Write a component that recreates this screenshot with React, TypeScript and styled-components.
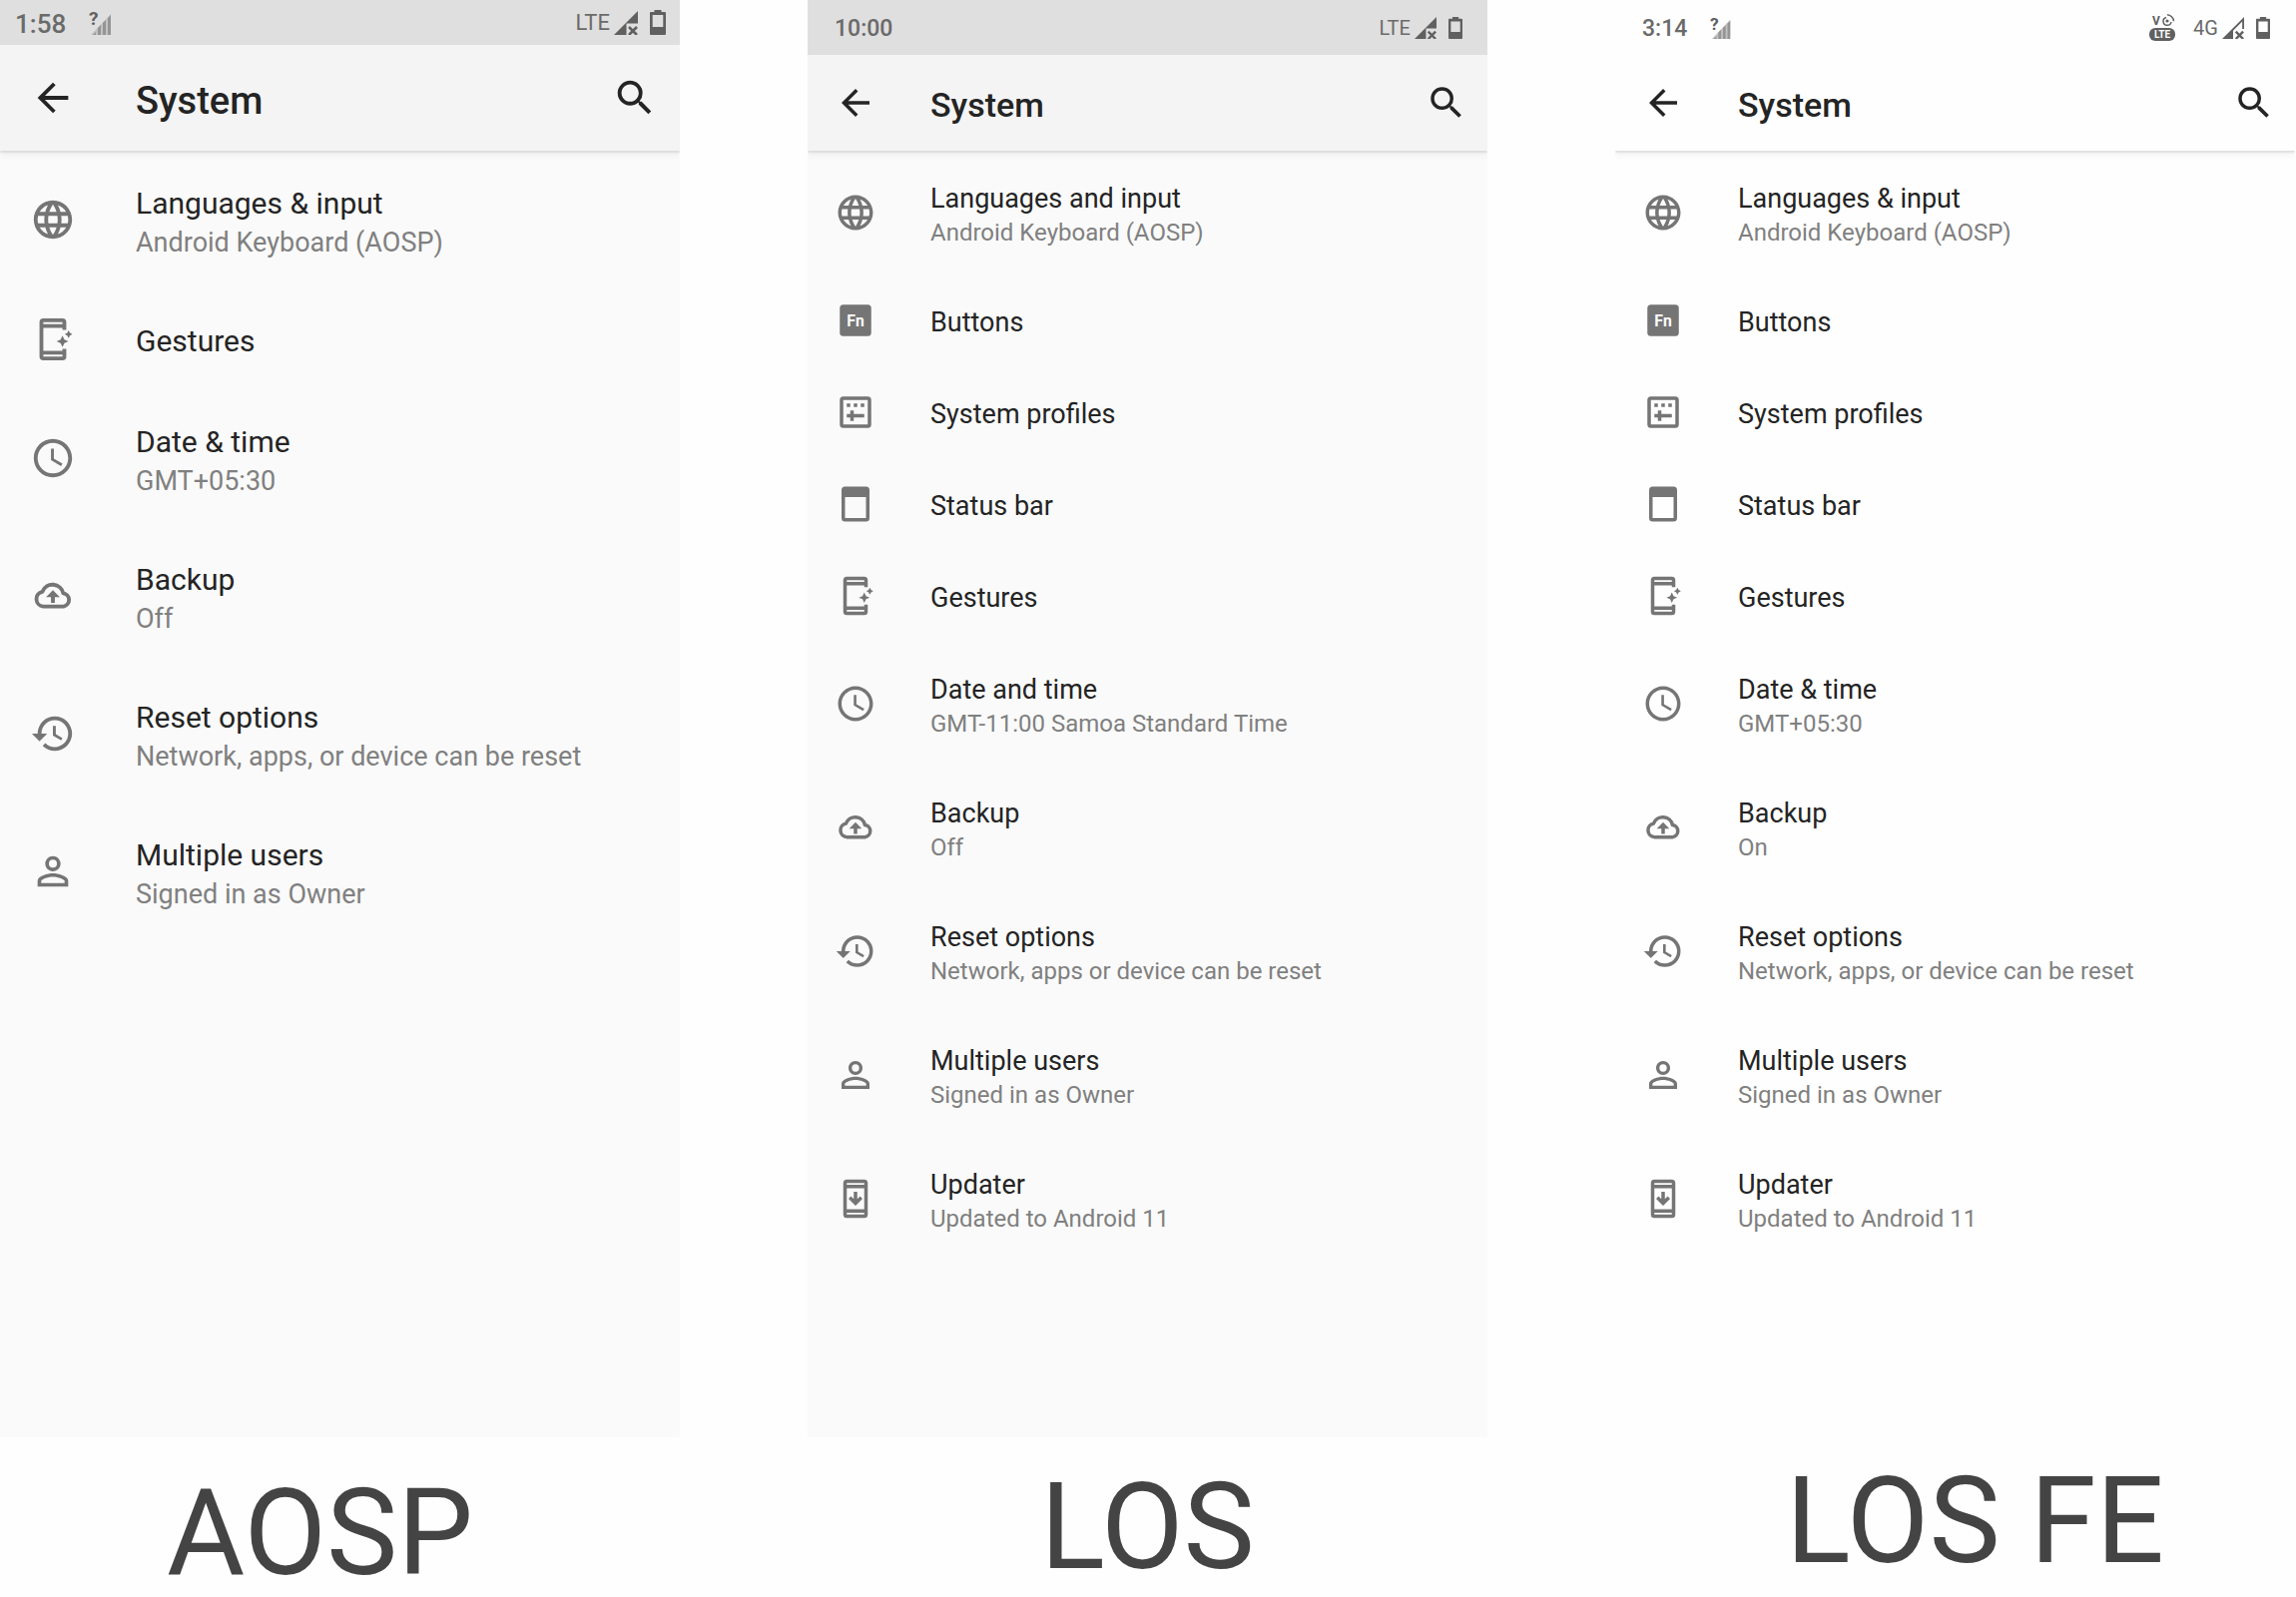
import React from 'react';
import styled, { createGlobalStyle, ThemeProvider } from 'styled-components';
import {
  MdArrowBack,
  MdHistory,
  MdLanguage,
  MdPersonOutline,
  MdSchedule,
  MdSearch,
} from 'react-icons/md';

/* ---------- density presets ---------- */

interface Density {
  statusHeight: number;
  statusLeft: number;
  statusRight: number;
  clock: number;
  network: number;
  signal: number;
  battery: number;
  icon: number;
  edge: number;
  searchEdge: number;
  textGap: number;
  heading: number;
  headingDrop: number;
  title: number;
  titleLine: number;
  summary: number;
  summaryLine: number;
  textDrop: number;
  rowSingle: number;
  rowDouble: number;
}

const large: Density = {
  statusHeight: 45,
  statusLeft: 15,
  statusRight: 14,
  clock: 26,
  network: 22,
  signal: 24,
  battery: 25,
  icon: 46,
  edge: 30,
  searchEdge: 22,
  textGap: 60,
  heading: 38,
  headingDrop: 6,
  title: 30,
  titleLine: 40,
  summary: 27,
  summaryLine: 38,
  textDrop: 5,
  rowSingle: 101,
  rowDouble: 138,
};

const compact: Density = {
  statusHeight: 55,
  statusLeft: 27,
  statusRight: 25,
  clock: 23,
  network: 20,
  signal: 22,
  battery: 22,
  icon: 42,
  edge: 27,
  searchEdge: 20,
  textGap: 54,
  heading: 34,
  headingDrop: 3,
  title: 27,
  titleLine: 36,
  summary: 24,
  summaryLine: 32,
  textDrop: 4,
  rowSingle: 92,
  rowDouble: 124,
};

interface Surface {
  status: string;
  header: string;
  body: string;
}

const grey: Surface = { status: '#dfdfdf', header: '#f4f4f4', body: '#fafafa' };
const white: Surface = { status: '#fefefe', header: '#fefefe', body: '#fefefe' };

interface PhoneTheme {
  d: Density;
  s: Surface;
}

/* ---------- styles ---------- */

const GlobalStyle = createGlobalStyle`
  *, *::before, *::after { box-sizing: border-box; }
  body {
    margin: 0;
    background: #fefefe;
    color: #242424;
    font-family: Roboto, "Liberation Sans", sans-serif;
  }
  button {
    border: 0;
    padding: 0;
    background: none;
    color: inherit;
    font: inherit;
    text-align: left;
    cursor: pointer;
  }
`;

const Comparison = styled.main`
  display: grid;
  grid-template-columns: repeat(3, minmax(0, 1fr));
  column-gap: 128px;
  min-height: 100vh;
  padding-right: 1px;
`;

const Column = styled.figure`
  display: flex;
  flex-direction: column;
  margin: 0;
`;

const Caption = styled.figcaption<{ $top: number; $left: number; $right: number }>`
  height: 160px;
  padding: ${(p) => p.$top}px ${(p) => p.$right}px 0 ${(p) => p.$left}px;
  color: #444;
  font-size: 120px;
  line-height: 120px;
  text-align: center;
  white-space: nowrap;
`;

const Phone = styled.section<{ theme: PhoneTheme }>`
  flex: 1;
  display: flex;
  flex-direction: column;
  overflow: hidden;
  background: ${(p) => p.theme.s.body};
`;

const StatusBar = styled.div<{ theme: PhoneTheme }>`
  display: flex;
  align-items: center;
  height: ${(p) => p.theme.d.statusHeight}px;
  padding: 0 ${(p) => p.theme.d.statusRight}px 0 ${(p) => p.theme.d.statusLeft}px;
  background: ${(p) => p.theme.s.status};
  color: #606060;
`;

const Clock = styled.time<{ theme: PhoneTheme }>`
  margin-right: 24px;
  padding-top: 3px;
  font-size: ${(p) => p.theme.d.clock}px;
  font-weight: 500;
  line-height: 32px;
  color: #6a6a6a;
`;

const StatusIcons = styled.div`
  display: flex;
  align-items: center;
  margin-left: auto;
`;

const Network = styled.span<{ theme: PhoneTheme }>`
  margin-right: 4px;
  color: #6a6a6a;
  font-size: ${(p) => p.theme.d.network}px;
  line-height: 28px;
`;

const SignalSvg = styled.svg<{ theme: PhoneTheme }>`
  width: ${(p) => p.theme.d.signal}px;
  height: ${(p) => p.theme.d.signal}px;
  margin-right: 12px;
`;

const UnknownSvg = styled.svg<{ theme: PhoneTheme }>`
  width: ${(p) => p.theme.d.signal}px;
  height: ${(p) => p.theme.d.signal}px;
  overflow: visible;
`;

const BatterySvg = styled.svg<{ theme: PhoneTheme }>`
  height: ${(p) => p.theme.d.battery}px;
`;

const VolteSvg = styled.svg`
  width: 27px;
  height: 28px;
  margin-right: 17px;
  overflow: visible;
`;

const Header = styled.header<{ theme: PhoneTheme }>`
  display: flex;
  align-items: center;
  height: ${(p) => 151 - p.theme.d.statusHeight}px;
  padding: 0 ${(p) => p.theme.d.searchEdge}px 0 ${(p) => p.theme.d.edge}px;
  background: ${(p) => p.theme.s.header};
  box-shadow: 0 2px 2px rgba(0, 0, 0, 0.1), 0 6px 6px rgba(0, 0, 0, 0.03);
`;

const IconButton = styled.button<{ theme: PhoneTheme }>`
  display: flex;
  font-size: ${(p) => p.theme.d.icon}px;
`;

const Heading = styled.h1<{ theme: PhoneTheme }>`
  flex: 1;
  margin: 0;
  padding: ${(p) => p.theme.d.headingDrop}px 0 0 ${(p) => p.theme.d.textGap}px;
  font-size: ${(p) => p.theme.d.heading}px;
  font-weight: 500;
  line-height: 44px;
`;

const List = styled.ul`
  margin: 0;
  padding: 0;
  list-style: none;
`;

const Row = styled.button<{ theme: PhoneTheme; $double: boolean }>`
  display: flex;
  align-items: center;
  gap: ${(p) => p.theme.d.textGap}px;
  width: 100%;
  min-height: ${(p) => (p.$double ? p.theme.d.rowDouble : p.theme.d.rowSingle)}px;
  padding-left: ${(p) => p.theme.d.edge}px;
`;

const RowIcon = styled.span<{ theme: PhoneTheme }>`
  display: flex;
  flex: none;
  color: #757575;
  font-size: ${(p) => p.theme.d.icon}px;
`;

const RowText = styled.span<{ theme: PhoneTheme }>`
  display: flex;
  flex-direction: column;
  padding-top: ${(p) => p.theme.d.textDrop}px;
`;

const Title = styled.span<{ theme: PhoneTheme }>`
  font-size: ${(p) => p.theme.d.title}px;
  line-height: ${(p) => p.theme.d.titleLine}px;
`;

const Summary = styled.span<{ theme: PhoneTheme }>`
  color: #808080;
  font-size: ${(p) => p.theme.d.summary}px;
  line-height: ${(p) => p.theme.d.summaryLine}px;
`;

/* ---------- icons ---------- */

const Glyph = ({ children }: { children: React.ReactNode }) => (
  <svg width="1em" height="1em" viewBox="0 0 24 24" fill="currentColor" aria-hidden="true">
    {children}
  </svg>
);

const FnIcon = () => (
  <Glyph>
    <rect x="3" y="3" width="18" height="18" rx="2" />
    <text x="12" y="15.3" fontSize="9" fontWeight="700" textAnchor="middle" fill="#fafafa">
      Fn
    </text>
  </Glyph>
);

const ProfilesIcon = () => (
  <Glyph>
    <path
      fillRule="evenodd"
      d="M5 3h14a2 2 0 0 1 2 2v14a2 2 0 0 1-2 2H5a2 2 0 0 1-2-2V5a2 2 0 0 1 2-2zm0 2v14h14V5z"
    />
    <path d="M7 7h2v2H7zM11 7h2v2h-2zM15 7h2v2h-2zM9 11h2v2h6v2h-6v2H9v-2H7v-2h2z" />
  </Glyph>
);

const StatusBarIcon = () => (
  <Glyph>
    <path
      fillRule="evenodd"
      d="M6 2h12a2 2 0 0 1 2 2v16a2 2 0 0 1-2 2H6a2 2 0 0 1-2-2V4a2 2 0 0 1 2-2zm0 6v12h12V8z"
    />
  </Glyph>
);

const GesturesIcon = () => (
  <Glyph>
    <path
      fillRule="evenodd"
      d="M7 1h10a2 2 0 0 1 2 2v4h-2V6H7v12h10v-1h2v4a2 2 0 0 1-2 2H7a2 2 0 0 1-2-2V3a2 2 0 0 1 2-2zm0 2v1h10V3zm0 17v1h10v-1z"
    />
    <path d="M17 10l1 2.100 2.100 .9-2.100 .9-1 2.100-1-2.100-2.100-.9 2.100-.9zM20.200 7.300l.7 1.300 1.300.7-1.300.7-.7 1.300-.7-1.300-1.300-.7 1.300-.7z" />
  </Glyph>
);

const BackupIcon = () => (
  <Glyph>
    <path
      d="M6.900 17.500A3.900 3.900 0 0 1 6.500 9.800A5.700 5.700 0 0 1 17.400 10.600A3.500 3.500 0 0 1 17.600 17.500z"
      fill="none"
      stroke="currentColor"
      strokeWidth="2"
      strokeLinejoin="round"
    />
    <path d="M12 9L8.400 12.700H11v3h2v-3h2.600z" />
  </Glyph>
);

const UpdaterIcon = () => (
  <Glyph>
    <path
      fillRule="evenodd"
      d="M7 1h10a2 2 0 0 1 2 2v18a2 2 0 0 1-2 2H7a2 2 0 0 1-2-2V3a2 2 0 0 1 2-2zm0 2v1h10V3zm0 3v12h10V6zm0 14v1h10v-1z"
    />
    <path d="M11 8h2v4.2l1.6-1.6L16 12l-4 4-4-4 1.4-1.4 1.6 1.6z" />
  </Glyph>
);

const UnknownSignal = () => (
  <UnknownSvg viewBox="0 0 24 24" role="img" aria-label="Unknown signal">
    <path d="M1 24L21 3v21z" fill="#c2c2c2" />
    <path
      d="M3 24l3-3v3zM8 24v-7l3-3v10zM13 24V12l3-3v15zM18 24V7l3-3v20z"
      fill="#959595"
    />
    <text x="-1" y="14" fontSize="19" fontWeight="700" fill="#606060">
      ?
    </text>
  </UnknownSvg>
);

const Signal = ({ weak }: { weak?: boolean }) => (
  <SignalSvg viewBox="0 0 24 24" fill="currentColor" role="img" aria-label="No data">
    <path
      d={weak ? 'M0 24L12 12v12zM12 12L24 0v13h-2V5L12 15z' : 'M0 24L24 0v12.5H12.5V24z'}
    />
    <path d="M15 16l8 8M23 16l-8 8" stroke="currentColor" strokeWidth="2.6" />
  </SignalSvg>
);

const Battery = () => (
  <BatterySvg viewBox="0 0 16 25" fill="currentColor" role="img" aria-label="Battery">
    <path
      fillRule="evenodd"
      d="M4.5 0h7v2H15a1 1 0 0 1 1 1v21a1 1 0 0 1-1 1H1a1 1 0 0 1-1-1V3a1 1 0 0 1 1-1h3.500zM2.700 5v12h10.600V5z"
    />
  </BatterySvg>
);

const Volte = () => (
  <VolteSvg viewBox="0 0 27 28" role="img" aria-label="VoLTE">
    <text x="3" y="11" fontSize="12" fontWeight="700" fill="#606060">
      V
    </text>
    <g fill="none" stroke="#606060" strokeWidth="1.500">
      <path d="M17 3.500a4 4 0 1 0 5 4.500" />
      <path d="M18 0.800a7 7 0 0 1 6.500 6.500" />
    </g>
    <circle cx="18" cy="7" r="1.600" fill="#606060" />
    <rect y="14" width="26" height="13" rx="6" fill="#606060" />
    <text x="13" y="24" fontSize="10" fontWeight="700" textAnchor="middle" fill="#fefefe">
      LTE
    </text>
  </VolteSvg>
);

/* ---------- data ---------- */

interface Item {
  icon: React.ReactNode;
  title: string;
  summary?: string;
}

const languages = (title: string): Item => ({
  icon: <MdLanguage />,
  title,
  summary: 'Android Keyboard (AOSP)',
});
const gestures: Item = { icon: <GesturesIcon />, title: 'Gestures' };
const dateTime = (title: string, summary: string): Item => ({
  icon: <MdSchedule />,
  title,
  summary,
});
const backup = (summary: string): Item => ({
  icon: <BackupIcon />,
  title: 'Backup',
  summary,
});
const reset = (summary: string): Item => ({
  icon: <MdHistory />,
  title: 'Reset options',
  summary,
});
const users: Item = {
  icon: <MdPersonOutline />,
  title: 'Multiple users',
  summary: 'Signed in as Owner',
};
const lineageExtras: Item[] = [
  { icon: <FnIcon />, title: 'Buttons' },
  { icon: <ProfilesIcon />, title: 'System profiles' },
  { icon: <StatusBarIcon />, title: 'Status bar' },
];
const updater: Item = {
  icon: <UpdaterIcon />,
  title: 'Updater',
  summary: 'Updated to Android 11',
};

interface Build {
  name: string;
  theme: PhoneTheme;
  time: string;
  network: string;
  unknownSignal?: boolean;
  volte?: boolean;
  caption: { top: number; left: number; right: number };
  items: Item[];
}

const builds: Build[] = [
  {
    name: 'AOSP',
    theme: { d: large, s: grey },
    time: '1:58',
    network: 'LTE',
    unknownSignal: true,
    caption: { top: 36, left: 0, right: 40 },
    items: [
      languages('Languages & input'),
      gestures,
      dateTime('Date & time', 'GMT+05:30'),
      backup('Off'),
      reset('Network, apps, or device can be reset'),
      users,
    ],
  },
  {
    name: 'LOS',
    theme: { d: compact, s: grey },
    time: '10:00',
    network: 'LTE',
    caption: { top: 30, left: 0, right: 0 },
    items: [
      languages('Languages and input'),
      ...lineageExtras,
      gestures,
      dateTime('Date and time', 'GMT-11:00 Samoa Standard Time'),
      backup('Off'),
      reset('Network, apps or device can be reset'),
      users,
      updater,
    ],
  },
  {
    name: 'LOS FE',
    theme: { d: compact, s: white },
    time: '3:14',
    network: '4G',
    unknownSignal: true,
    volte: true,
    caption: { top: 24, left: 40, right: 0 },
    items: [
      languages('Languages & input'),
      ...lineageExtras,
      gestures,
      dateTime('Date & time', 'GMT+05:30'),
      backup('On'),
      reset('Network, apps, or device can be reset'),
      users,
      updater,
    ],
  },
];

/* ---------- page ---------- */

const SettingsPhone = ({ build }: { build: Build }) => (
  <ThemeProvider theme={build.theme}>
    <Phone aria-label={`${build.name} system settings`}>
      <StatusBar>
        <Clock>{build.time}</Clock>
        {build.unknownSignal && <UnknownSignal />}
        <StatusIcons>
          {build.volte && <Volte />}
          <Network>{build.network}</Network>
          <Signal weak={build.volte} />
          <Battery />
        </StatusIcons>
      </StatusBar>
      <Header>
        <IconButton aria-label="Back">
          <MdArrowBack />
        </IconButton>
        <Heading>System</Heading>
        <IconButton aria-label="Search">
          <MdSearch />
        </IconButton>
      </Header>
      <List>
        {build.items.map((item) => (
          <li key={item.title}>
            <Row $double={Boolean(item.summary)}>
              <RowIcon>{item.icon}</RowIcon>
              <RowText>
                <Title>{item.title}</Title>
                {item.summary && <Summary>{item.summary}</Summary>}
              </RowText>
            </Row>
          </li>
        ))}
      </List>
    </Phone>
  </ThemeProvider>
);

export default function App() {
  return (
    <>
      <GlobalStyle />
      <Comparison>
        {builds.map((build) => (
          <Column key={build.name}>
            <SettingsPhone build={build} />
            <Caption
              $top={build.caption.top}
              $left={build.caption.left}
              $right={build.caption.right}
            >
              {build.name}
            </Caption>
          </Column>
        ))}
      </Comparison>
    </>
  );
}
